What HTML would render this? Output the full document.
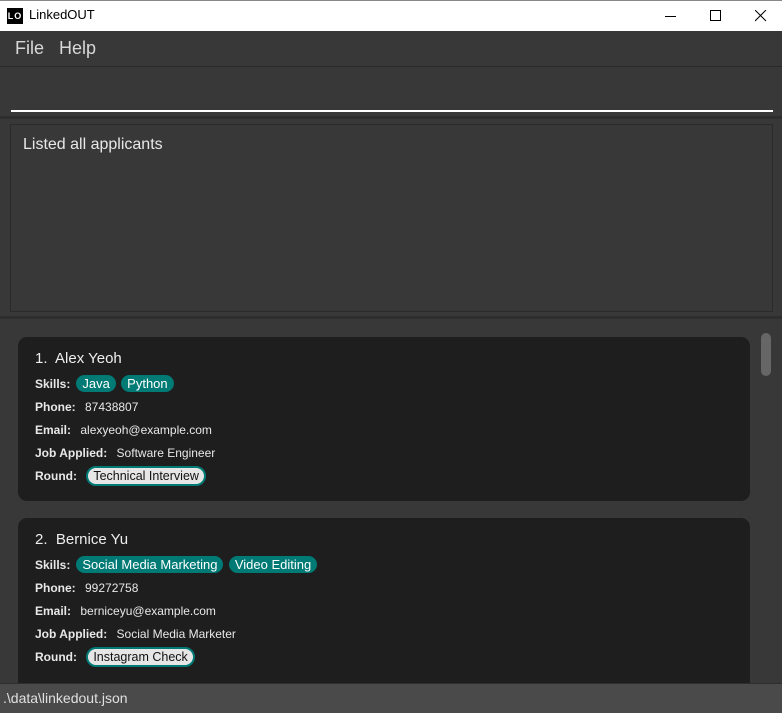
<!DOCTYPE html>
<html><head><style>
*{margin:0;padding:0;box-sizing:border-box}
body{width:782px;height:713px;overflow:hidden;background:#383838;font-family:"Segoe UI","Liberation Sans",sans-serif;position:relative}
.abs{position:absolute}
.title{left:0;top:0;width:782px;height:31px;background:#fff;border-top:1px solid #888}
.menu{top:31px;left:0;width:782px;height:36px;background:#383838;border-bottom:1px solid #2a2a2a;color:#d8d8d8;font-size:18px}
.card{left:18px;width:732px;background:#1e1e1e;border-radius:9px;color:#fff}
.name{position:absolute;left:17px;font-size:15px;color:#eee}
.row{position:absolute;left:17px;font-size:12px;color:#e8e8e8;white-space:nowrap}
.row b{font-weight:bold;margin-right:6px}
.tag{display:inline-block;background:#007a75;color:#fff;border-radius:9px;padding:1px 6px;font-size:13px;margin-right:2px}
.rnd{display:inline-block;background:#e6e6e6;color:#111;border:2px solid #007a75;border-radius:11px;padding:1px 5px;font-size:12.5px}
</style></head><body>
<div class="abs title">
 <div class="abs" style="left:7px;top:7px;width:16px;height:16px;background:#000;color:#fff;font-size:9px;font-weight:bold;line-height:16px;text-align:center;letter-spacing:1px">LO</div>
 <div class="abs" style="left:29px;top:6px;font-size:13px;color:#000">LinkedOUT</div>
 <div class="abs" style="left:665px;top:15px;width:11px;height:1px;background:#000"></div>
 <div class="abs" style="left:710px;top:9px;width:11px;height:11px;border:1px solid #000"></div>
 <svg class="abs" style="left:755px;top:9px" width="12" height="12"><path d="M0 0L11 11M11 0L0 11" stroke="#000" stroke-width="1"/></svg>
</div>
<div class="abs menu"><span class="abs" style="left:15px;top:7px">File</span><span class="abs" style="left:59px;top:7px">Help</span></div>
<div class="abs" style="left:11px;top:110px;width:762px;height:2px;background:#fff"></div>
<div class="abs" style="left:0;top:116px;width:782px;height:3px;background:#2e2e2e"></div>
<div class="abs" style="left:10px;top:124px;width:763px;height:188px;border:1px solid #2a2a2a;background:#383838"><span class="abs" style="left:12px;top:11px;color:#e8e8e8;font-size:16px">Listed all applicants</span></div>
<div class="abs" style="left:0;top:316px;width:782px;height:3px;background:#2e2e2e"></div>
<div class="abs" style="left:761px;top:333px;width:10px;height:43px;background:#666;border-radius:5px"></div>
<div class="abs card" style="top:337px;height:164px">
 <div class="name" style="top:13px">1.&nbsp; Alex Yeoh</div>
 <div class="row" style="top:38px"><b>Skills:</b><span class="tag">Java</span> <span class="tag">Python</span></div>
 <div class="row" style="top:63px"><b>Phone:</b> 87438807</div>
 <div class="row" style="top:86px"><b>Email:</b> alexyeoh@example.com</div>
 <div class="row" style="top:109px"><b>Job Applied:</b> Software Engineer</div>
 <div class="row" style="top:129px"><b>Round:</b> <span class="rnd">Technical Interview</span></div>
</div>
<div class="abs card" style="top:518px;height:175px">
 <div class="name" style="top:13px">2.&nbsp; Bernice Yu</div>
 <div class="row" style="top:38px"><b>Skills:</b><span class="tag">Social Media Marketing</span> <span class="tag">Video Editing</span></div>
 <div class="row" style="top:63px"><b>Phone:</b> 99272758</div>
 <div class="row" style="top:86px"><b>Email:</b> berniceyu@example.com</div>
 <div class="row" style="top:109px"><b>Job Applied:</b> Social Media Marketer</div>
 <div class="row" style="top:129px"><b>Round:</b> <span class="rnd">Instagram Check</span></div>
</div>
<div class="abs" style="left:0;top:683px;width:782px;height:30px;background:#4a4a4a;border-top:1px solid #2e2e2e;color:#e0e0e0;font-size:14px;padding:6px 3px">.\data\linkedout.json</div>
</body></html>
